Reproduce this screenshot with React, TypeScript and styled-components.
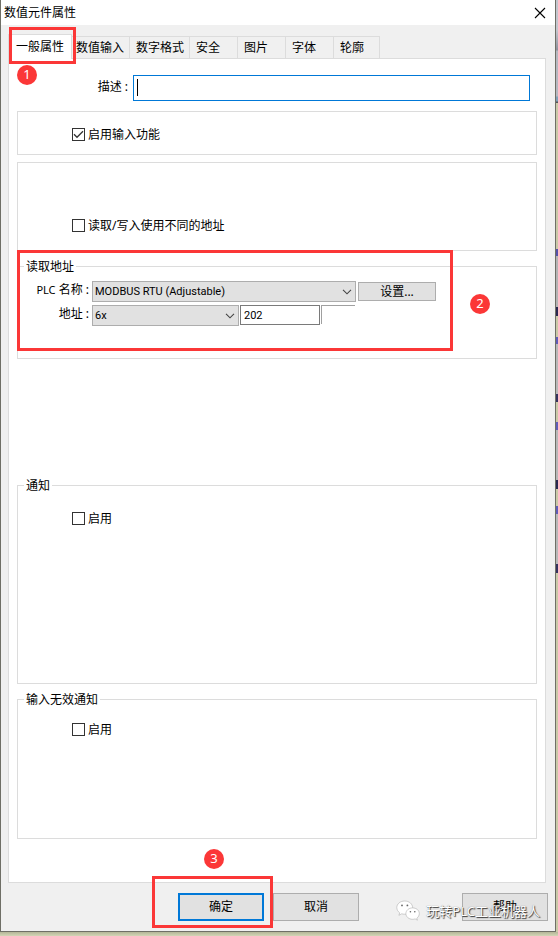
import React, { useState } from "react";
import styled, { createGlobalStyle, css } from "styled-components";

const RED = "#fb3737";
const LINE = "#dcdcdc";

const GlobalStyle = createGlobalStyle`
  *, *::before, *::after { box-sizing: border-box; }
  body {
    margin: 0;
    color: #000;
    font-family: "Noto Sans", "Noto Sans CJK SC", sans-serif;
    font-size: 12px;
    line-height: 18px;
  }
  button, input, select { font: inherit; color: inherit; }
`;

const Desktop = styled.div`
  min-height: 100vh;
  padding: 0 2px 4px 0;
  background:
    linear-gradient(#b5b698, #d3d5b6) left bottom / 100% 4px no-repeat,
    linear-gradient(
      #c3c6ce 0 30px, #8d909c 50px, #b5b8c0 51px 96px, #7fa0b8 97px 101px, #55565a 102px 103px,
      #c9c9a8 103px 249px, #5552a8 249px 256px, #b4b4b4 256px 307px, #2a2850 307px 316px,
      #c9c9a8 316px 337px, #5f5cb8 337px 344px, #b8b8b8 344px 394px, #35325f 394px 402px,
      #c9c9a8 402px 422px, #5f5cb8 422px 430px, #b8b8b8 430px 480px, #2a2850 480px 489px,
      #c9c9a8 489px 506px, #5f5cb8 506px 514px, #b8b8b8 514px 564px, #35325f 564px 573px,
      #c9c9a8 573px
    );
`;

const Dialog = styled.main`
  display: flex;
  flex-direction: column;
  background: #f0f0f0;
  border: 1px solid #6f6f66;
  border-top: 0;
`;

const TitleBar = styled.header`
  display: flex;
  align-items: center;
  justify-content: space-between;
  height: 25px;
  padding: 0 8px 0 3px;
  background: #fff;
`;

const Title = styled.h1`
  margin: 0;
  font-size: 12px;
  font-weight: 400;
`;

const CloseButton = styled.button`
  display: grid;
  place-items: center;
  width: 14px;
  height: 18px;
  padding: 0;
  border: 0;
  background: none;
`;

const TabList = styled.div`
  display: flex;
  align-items: flex-end;
  height: 33px;
  padding: 0 7px;
`;

const Tab = styled.button<{ $active?: boolean }>`
  min-width: 48px;
  height: 22px;
  padding: 0 5px 0 6px;
  border: 1px solid ${LINE};
  border-width: 1px 1px 0 0;
  background: #f0f0f0;
  text-align: left;
  white-space: nowrap;

  &:last-child { min-width: 46px; }

  ${(p) =>
    p.$active &&
    css`
      position: relative;
      z-index: 1;
      height: 25px;
      margin: 0 -2px -1px 0;
      padding: 0 7px;
      border-left-width: 1px;
      background: #fff;
    `}
`;

const Pane = styled.section`
  display: flex;
  flex-direction: column;
  margin: 0 9px 0 7px;
  padding: 16px 8px 43px;
  border: 1px solid ${LINE};
  background: #fff;
`;

const DescriptionRow = styled.div`
  display: grid;
  grid-template-columns: 112px 1fr;
  column-gap: 4px;
  align-items: center;
  margin: 0 7px 10px 0;
`;

const FieldLabel = styled.label`
  padding: 0 1px 2px 0;
  text-align: right;
  white-space: nowrap;
`;

const Latin = styled.span`
  font-size: 11px;
`;

const TextInput = styled.input<{ $focus?: boolean }>`
  min-width: 0;
  height: ${(p) => (p.$focus ? 26 : 20)}px;
  padding: 0 3px;
  border: 1px solid ${(p) => (p.$focus ? "#0078d7" : "#7a7a7a")};
  border-radius: 0;
  outline: 0;
  background: #fff;
  font-family: Roboto, "Noto Sans CJK SC", sans-serif;
  font-size: 11px;
`;

const DescriptionField = styled.div`
  position: relative;
  display: grid;
`;

const Caret = styled.span`
  position: absolute;
  left: 4px;
  top: 4px;
  width: 1px;
  height: 17px;
  background: #000;
`;

const Group = styled.fieldset<{ $height: number; $top: number; $gap: number }>`
  min-width: 0;
  min-height: ${(p) => p.$height}px;
  margin: ${(p) => p.$gap}px 0 0;
  padding: ${(p) => p.$top}px 0 0;
  border: 1px solid ${LINE};
`;

const Legend = styled.legend`
  height: 18px;
  margin-left: 6px;
  padding: 0 2px;
  line-height: 20px;
`;

const CheckLabel = styled.label`
  display: flex;
  align-items: center;
  gap: 3px;
  width: max-content;
  margin-left: 54px;
  line-height: 19px;
`;

const CheckFrame = styled.span`
  display: grid;
  place-items: center;

  > * { grid-area: 1 / 1; }
  svg { display: none; pointer-events: none; }
  input:checked + svg { display: block; }
`;

const CheckInput = styled.input`
  appearance: none;
  width: 13px;
  height: 13px;
  margin: 0;
  border: 1px solid #333;
  background: #fff;
`;

const AddressGrid = styled.div`
  position: relative;
  display: grid;
  grid-template-columns: 72px 1fr;
  grid-auto-rows: 21px;
  column-gap: 2px;
  row-gap: 3px;
`;

const AddressRow = styled.div`
  display: flex;
  gap: 1px;
  height: 21px;
`;

const SelectFrame = styled.span<{ $width: number }>`
  display: grid;
  align-items: center;
  width: ${(p) => p.$width}px;
  height: 21px;

  > * { grid-area: 1 / 1; }
  svg { justify-self: end; margin-right: 4px; pointer-events: none; }
`;

const SelectBox = styled.select`
  appearance: none;
  width: 100%;
  height: 21px;
  padding: 0 18px 0 2px;
  border: 1px solid #adadad;
  border-radius: 0;
  background: #e1e1e1;
  font-family: Roboto, "Noto Sans CJK SC", sans-serif;
  font-size: 11px;
`;

const AddressInput = styled(TextInput)`
  width: 80px;
`;

const ClippedField = styled.span`
  width: 34px;
  height: 19px;
  border: 1px solid #a0a0a0;
  border-width: 1px 0 0 1px;
`;

const PushButton = styled.button<{ $primary?: boolean }>`
  width: 86px;
  height: 28px;
  padding: 0;
  border: ${(p) => (p.$primary ? "2px solid #0078d7" : "1px solid #adadad")};
  background: #e1e1e1;
`;

const SettingsButton = styled(PushButton)`
  width: 78px;
  height: 19px;
  margin: 1px 0 0 1px;
  line-height: 16px;
`;

const Footer = styled.footer`
  display: flex;
  justify-content: flex-end;
  gap: 9px;
  padding: 10px 7px;
`;

const Anchor = styled.div<{ $push?: boolean }>`
  position: relative;
  display: flex;
  margin-left: ${(p) => (p.$push ? 94 : 0)}px;
`;

const TabAnchor = styled.div`
  position: relative;
  z-index: 2;
  display: flex;
`;

const RedFrame = styled.span<{ $inset: string }>`
  position: absolute;
  inset: ${(p) => p.$inset};
  z-index: 3;
  border: 3px solid ${RED};
  pointer-events: none;
`;

const Badge = styled.span<{ $left: number; $top: number }>`
  position: absolute;
  left: ${(p) => p.$left}px;
  top: ${(p) => p.$top}px;
  z-index: 3;
  width: 20px;
  height: 20px;
  border-radius: 50%;
  background: ${RED};
  color: #fff;
  font-size: 13px;
  line-height: 19px;
  text-align: center;
`;

const Watermark = styled.div`
  position: absolute;
  right: 8px;
  top: 6px;
  display: flex;
  align-items: center;
  gap: 6px;
  color: #fff;
  font-size: 13px;
  line-height: 24px;
  white-space: nowrap;
  text-shadow: 1px 1px 1px #333, 0 0 1px #777;
  pointer-events: none;
`;

function Chevron() {
  return (
    <svg width="10" height="6" viewBox="0 0 10 6" fill="none" stroke="#444" aria-hidden="true">
      <path d="M1 .8 5 4.8 9 .8" strokeWidth="1.1" />
    </svg>
  );
}

function ChatLogo() {
  return (
    <svg width="24" height="22" viewBox="0 0 24 22" aria-hidden="true">
      <g fill="#fff" stroke="#b0b0b0" strokeWidth=".6">
        <path d="M8.7 1C4.2 1 .8 3.9.8 7.6c0 2.1 1.1 3.9 2.9 5.2l-.8 2.5 2.8-1.5c1 .3 2 .4 3 .4 4.4 0 7.9-2.9 7.9-6.6S13.1 1 8.7 1Z" />
        <path d="M16.6 7.9c-3.8 0-6.7 2.5-6.7 5.7s2.9 5.700 6.700 5.700c.9 0 1.700-.1 2.500-.4l2.300 1.300-.6-2.100c1.500-1 2.500-2.600 2.500-4.500 0-3.200-2.900-5.700-6.700-5.700Z" />
      </g>
      <g fill="#666">
        <circle cx="6" cy="5.4" r=".9" />
        <circle cx="11.4" cy="5.4" r=".9" />
        <circle cx="14.4" cy="11.8" r=".8" />
        <circle cx="18.8" cy="11.8" r=".8" />
      </g>
    </svg>
  );
}

function Check({ text, defaultChecked }: { text: string; defaultChecked?: boolean }) {
  return (
    <CheckLabel>
      <CheckFrame>
        <CheckInput type="checkbox" defaultChecked={defaultChecked} />
        <svg width="11" height="11" viewBox="0 0 11 11" fill="none" stroke="#333" strokeWidth="1.3" aria-hidden="true">
          <path d="M1 5.3 4 8.3 10 2.3" />
        </svg>
      </CheckFrame>
      {text}
    </CheckLabel>
  );
}

function Select({ id, width, value }: { id: string; width: number; value: string }) {
  return (
    <SelectFrame $width={width}>
      <SelectBox id={id} defaultValue={value}>
        <option>{value}</option>
      </SelectBox>
      <Chevron />
    </SelectFrame>
  );
}

const TABS = ["数值输入", "数字格式", "安全", "图片", "字体", "轮廓"];

export default function App() {
  const [description, setDescription] = useState("");
  return (
    <>
      <GlobalStyle />
      <Desktop>
        <Dialog>
          <TitleBar>
            <Title>数值元件属性</Title>
            <CloseButton aria-label="关闭">
              <svg width="12" height="12" viewBox="0 0 12 12" stroke="#000" strokeWidth="1.1" aria-hidden="true">
                <path d="M1 1 11 11M11 1 1 11" />
              </svg>
            </CloseButton>
          </TitleBar>

          <TabList role="tablist">
            <TabAnchor role="presentation">
              <Tab $active role="tab" aria-selected="true">一般属性</Tab>
              <RedFrame $inset="-7px -6px -6px 1px" />
              <Badge $left={9} $top={31}>1</Badge>
            </TabAnchor>
            {TABS.map((name) => (
              <Tab key={name} role="tab" aria-selected="false">{name}</Tab>
            ))}
          </TabList>

          <Pane role="tabpanel">
            <DescriptionRow>
              <FieldLabel htmlFor="description">描述 :</FieldLabel>
              <DescriptionField>
                <TextInput
                  $focus
                  id="description"
                  value={description}
                  onChange={(e) => setDescription(e.target.value)}
                />
                {description === "" && <Caret />}
              </DescriptionField>
            </DescriptionRow>

            <Group $height={44} $top={13} $gap={0}>
              <Check text="启用输入功能" defaultChecked />
            </Group>

            <Group $height={89} $top={53} $gap={7}>
              <Check text="读取/写入使用不同的地址" />
            </Group>

            <Group $height={102} $top={6} $gap={6}>
              <Legend>读取地址</Legend>
              <AddressGrid>
                <FieldLabel htmlFor="plc"><Latin>PLC</Latin> 名称 :</FieldLabel>
                <AddressRow>
                  <Select id="plc" width={264} value="MODBUS RTU (Adjustable)" />
                  <SettingsButton type="button">设置...</SettingsButton>
                </AddressRow>
                <FieldLabel htmlFor="area">地址 :</FieldLabel>
                <AddressRow>
                  <Select id="area" width={147} value="6x" />
                  <AddressInput aria-label="地址" defaultValue="202" />
                  <ClippedField />
                </AddressRow>
                <RedFrame $inset="-31px 83px -25px -1px" />
                <Badge $left={452} $top={13}>2</Badge>
              </AddressGrid>
            </Group>

            <Group $height={208} $top={15} $gap={117}>
              <Legend>通知</Legend>
              <Check text="启用" />
            </Group>

            <Group $height={149} $top={12} $gap={6}>
              <Legend>输入无效通知</Legend>
              <Check text="启用" />
            </Group>
          </Pane>

          <Footer>
            <Anchor>
              <PushButton $primary type="button">确定</PushButton>
              <RedFrame $inset="-17px -9px -7px -26px" />
              <Badge $left={26} $top={-44}>3</Badge>
            </Anchor>
            <PushButton type="button">取消</PushButton>
            <Anchor $push>
              <PushButton type="button">帮助</PushButton>
              <Watermark>
                <ChatLogo />
                玩转PLC工业机器人
              </Watermark>
            </Anchor>
          </Footer>
        </Dialog>
      </Desktop>
    </>
  );
}
